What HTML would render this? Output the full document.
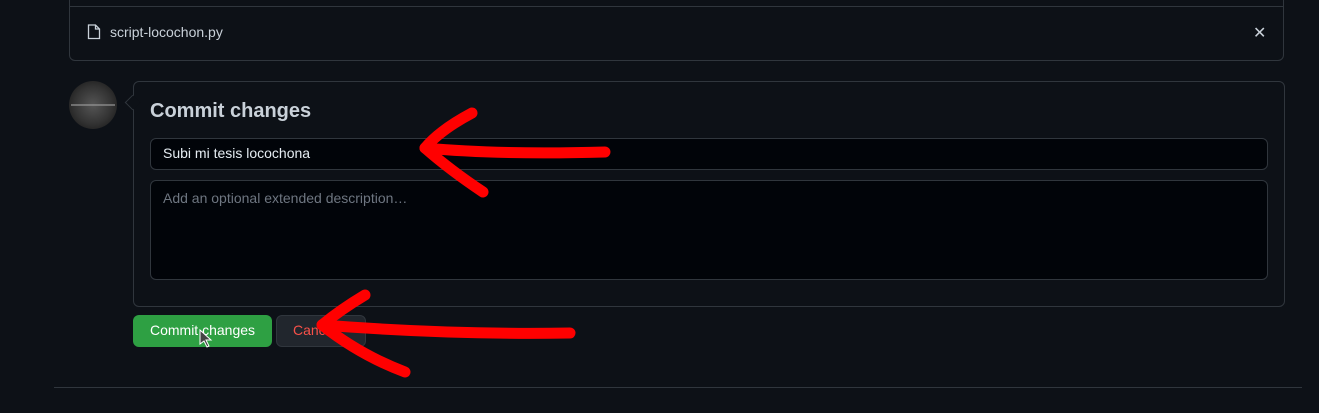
<!DOCTYPE html>
<html><head><style>
body{margin:0;width:1319px;height:413px;background:#0d1117;font-family:"Liberation Sans",sans-serif;position:relative;overflow:hidden;color:#e6edf3}
.abs{position:absolute}
</style></head><body>
<div class="abs" style="left:69px;top:-8px;width:1215px;height:69px;border:1px solid #30363d;border-radius:6px;box-sizing:border-box"></div>
<div class="abs" style="left:70px;top:6px;width:1213px;height:1px;background:#30363d"></div>
<svg class="abs" style="left:87px;top:24px" width="14" height="16" viewBox="0 0 14 16"><path d="M1.5 1h7l4 4v9.5h-11z M8.5 1v4h4" fill="none" stroke="#c9d1d9" stroke-width="1.3"/></svg>
<div class="abs" style="left:110px;top:24px;font-size:14px;color:#c9d1d9">script-locochon.py</div>
<div class="abs" style="left:1253px;top:23px;font-size:16px;color:#c9d1d9">✕</div>
<div class="abs" style="left:69px;top:81px;width:48px;height:48px;border-radius:50%;background:radial-gradient(circle,#555 0%,#333 55%,#111 100%)"></div>
<div class="abs" style="left:71px;top:104px;width:44px;height:2px;background:#999;opacity:.6"></div>
<div class="abs" style="left:133px;top:81px;width:1152px;height:226px;border:1px solid #30363d;border-radius:6px;box-sizing:border-box"></div>
<div class="abs" style="left:127px;top:97px;width:10px;height:10px;background:#0d1117;border-left:1px solid #30363d;border-bottom:1px solid #30363d;transform:rotate(45deg)"></div>
<div class="abs" style="left:150px;top:100px;font-size:20px;font-weight:bold;color:#c9d1d9">Commit changes</div>
<div class="abs" style="left:150px;top:138px;width:1118px;height:32px;border:1px solid #30363d;border-radius:6px;background:#010409;box-sizing:border-box;padding:6px 12px;font-size:14px">Subi mi tesis locochona</div>
<div class="abs" style="left:150px;top:180px;width:1118px;height:100px;border:1px solid #30363d;border-radius:6px;background:#010409;box-sizing:border-box;padding:9px 12px;font-size:14px;color:#6e7681">Add an optional extended description…</div>
<div class="abs" style="left:133px;top:315px;width:139px;height:32px;background:#2ea043;border-radius:6px;font-size:14px;color:#fff;text-align:center;line-height:31px">Commit changes</div>
<div class="abs" style="left:276px;top:315px;width:90px;height:32px;background:#21262d;border:1px solid #30363d;border-radius:6px;box-sizing:border-box;font-size:14px;color:#f85149;padding-left:16px;line-height:29px">Cancel</div>
<div class="abs" style="left:54px;top:387px;width:1248px;height:1px;background:#30363d"></div>
<svg class="abs" style="left:0;top:0" width="1319" height="413"><g fill="none" stroke="#f00" stroke-width="11" stroke-linecap="round" stroke-linejoin="round">
<path d="M472 113 Q440 130 425 148 Q500 155 605 152"/><path d="M425 148 Q450 170 483 192"/>
<path d="M365 295 Q340 310 322 325 Q450 335 570 333"/><path d="M322 325 Q360 355 405 372"/></g>
<path d="M200 330 l0 14 l4 -3 l3 6 l2 -1 l-3 -6 l5 0z" fill="#444" stroke="#fff" stroke-width="1"/></svg>
</body></html>
